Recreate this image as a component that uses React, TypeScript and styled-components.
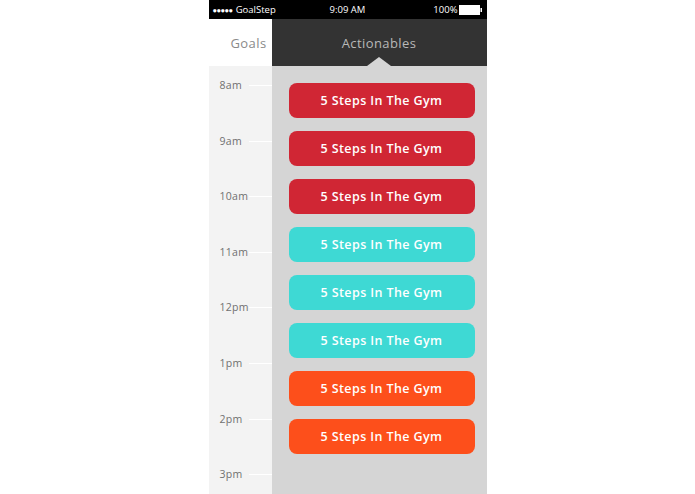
import React from "react"
import styled, { createGlobalStyle } from "styled-components"

type Tone = "red" | "teal" | "orange"

const tones: Record<Tone, string> = {
  red: "#d02634",
  teal: "#3ed9d4",
  orange: "#fd4f1b",
}

const hours = ["8am", "9am", "10am", "11am", "12pm", "1pm", "2pm", "3pm"]

const tasks: Tone[] = ["red", "red", "red", "teal", "teal", "teal", "orange", "orange"]

const GlobalStyle = createGlobalStyle`
  html, body {
    margin: 0;
    padding: 0;
    background: #ffffff;
  }
  body {
    font-family: "Open Sans", "Noto Sans", sans-serif;
  }
`

const App: React.FunctionComponent = () => {
  return (
    <>
      <GlobalStyle />
      <Page>
        <Phone>
          <StatusBar>
            <Carrier>
              <Dots>●●●●●</Dots>
              GoalStep
            </Carrier>
            <Clock>9:09 AM</Clock>
            <Battery>
              100%
              <BatteryIcon width="24" height="10" viewBox="0 0 24 10">
                <rect x="0.5" y="0.5" width="20" height="9" fill="#fff" stroke="#fff" />
                <rect x="21.5" y="3" width="1.5" height="4" fill="#fff" />
              </BatteryIcon>
            </Battery>
          </StatusBar>

          <Tabs>
            <Tab>Goals</Tab>
            <ActiveTab>
              Actionables
              <Pointer />
            </ActiveTab>
          </Tabs>

          <Body>
            <Timeline>
              {hours.map((h) => (
                <HourRow key={h}>
                  <HourLabel>{h}</HourLabel>
                  <HourTick />
                </HourRow>
              ))}
            </Timeline>
            <TaskList>
              {tasks.map((tone, i) => (
                <TaskCard key={i} $tone={tone}>
                  5 Steps In The Gym
                </TaskCard>
              ))}
            </TaskList>
          </Body>
        </Phone>
      </Page>
    </>
  )
}

const Page = styled.div`
  display: flex;
  justify-content: center;
  height: 494px;
  overflow: hidden;
`

const Phone = styled.div`
  width: 278px;
  display: flex;
  flex-direction: column;
  height: 494px;
`

const StatusBar = styled.div`
  flex-shrink: 0;
  height: 19px;
  background: #000;
  color: #fff;
  display: grid;
  grid-template-columns: 1fr auto 1fr;
  align-items: center;
  padding: 0 4px;
  font-size: 9.5px;
  font-family: "Open Sans", sans-serif;
`

const Carrier = styled.div`
  display: flex;
  align-items: center;
  gap: 3px;
`

const Dots = styled.span`
  font-size: 7.5px;
  letter-spacing: -0.5px;
`

const Clock = styled.div`
  text-align: center;
`

const Battery = styled.div`
  display: flex;
  justify-content: flex-end;
  align-items: center;
  gap: 1px;
`

const BatteryIcon = styled.svg`
  display: block;
`

const Tabs = styled.div`
  flex-shrink: 0;
  height: 47px;
  display: flex;
  font-size: 13px;
  letter-spacing: 0.4px;
  font-family: "Open Sans", sans-serif;
`

const Tab = styled.div`
  width: 63px;
  background: #fff;
  color: #8a8a8a;
  display: flex;
  align-items: center;
  justify-content: flex-end;
  padding-right: 5px;
  box-sizing: border-box;
`

const ActiveTab = styled.div`
  flex: 1;
  background: #333333;
  color: #b8b8b8;
  display: flex;
  align-items: center;
  justify-content: center;
  position: relative;
`

const Pointer = styled.span`
  position: absolute;
  bottom: 0;
  left: 50%;
  transform: translateX(-50%);
  width: 0;
  height: 0;
  border-left: 12px solid transparent;
  border-right: 12px solid transparent;
  border-bottom: 9px solid #d5d5d5;
`

const Body = styled.div`
  flex: 1;
  min-height: 0;
  overflow: hidden;
  display: flex;
`

const Timeline = styled.div`
  width: 63px;
  background: #f3f3f3;
  padding-top: 13px;
  box-sizing: border-box;
`

const HourRow = styled.div`
  height: 55.6px;
  display: flex;
  align-items: flex-start;
  padding-left: 11px;
`

const HourLabel = styled.span`
  width: 29px;
  font-size: 10.5px;
  line-height: 12px;
  letter-spacing: 0.3px;
  color: #707070;
  font-family: "Open Sans", sans-serif;
`

const HourTick = styled.span`
  flex: 1;
  height: 1px;
  margin-top: 6px;
  background: #ffffff;
`

const TaskList = styled.div`
  flex: 1;
  background: #d5d5d5;
  display: flex;
  flex-direction: column;
  gap: 13px;
  padding: 17px 12px 0 17px;
`

const TaskCard = styled.div<{ $tone: Tone }>`
  flex-shrink: 0;
  height: 35px;
  border-radius: 8px;
  background: ${(p) => tones[p.$tone]};
  color: #fff;
  display: flex;
  align-items: center;
  justify-content: center;
  font-size: 12.5px;
  font-weight: 600;
  letter-spacing: 0.4px;
  font-family: "Open Sans", sans-serif;
`

export default App
